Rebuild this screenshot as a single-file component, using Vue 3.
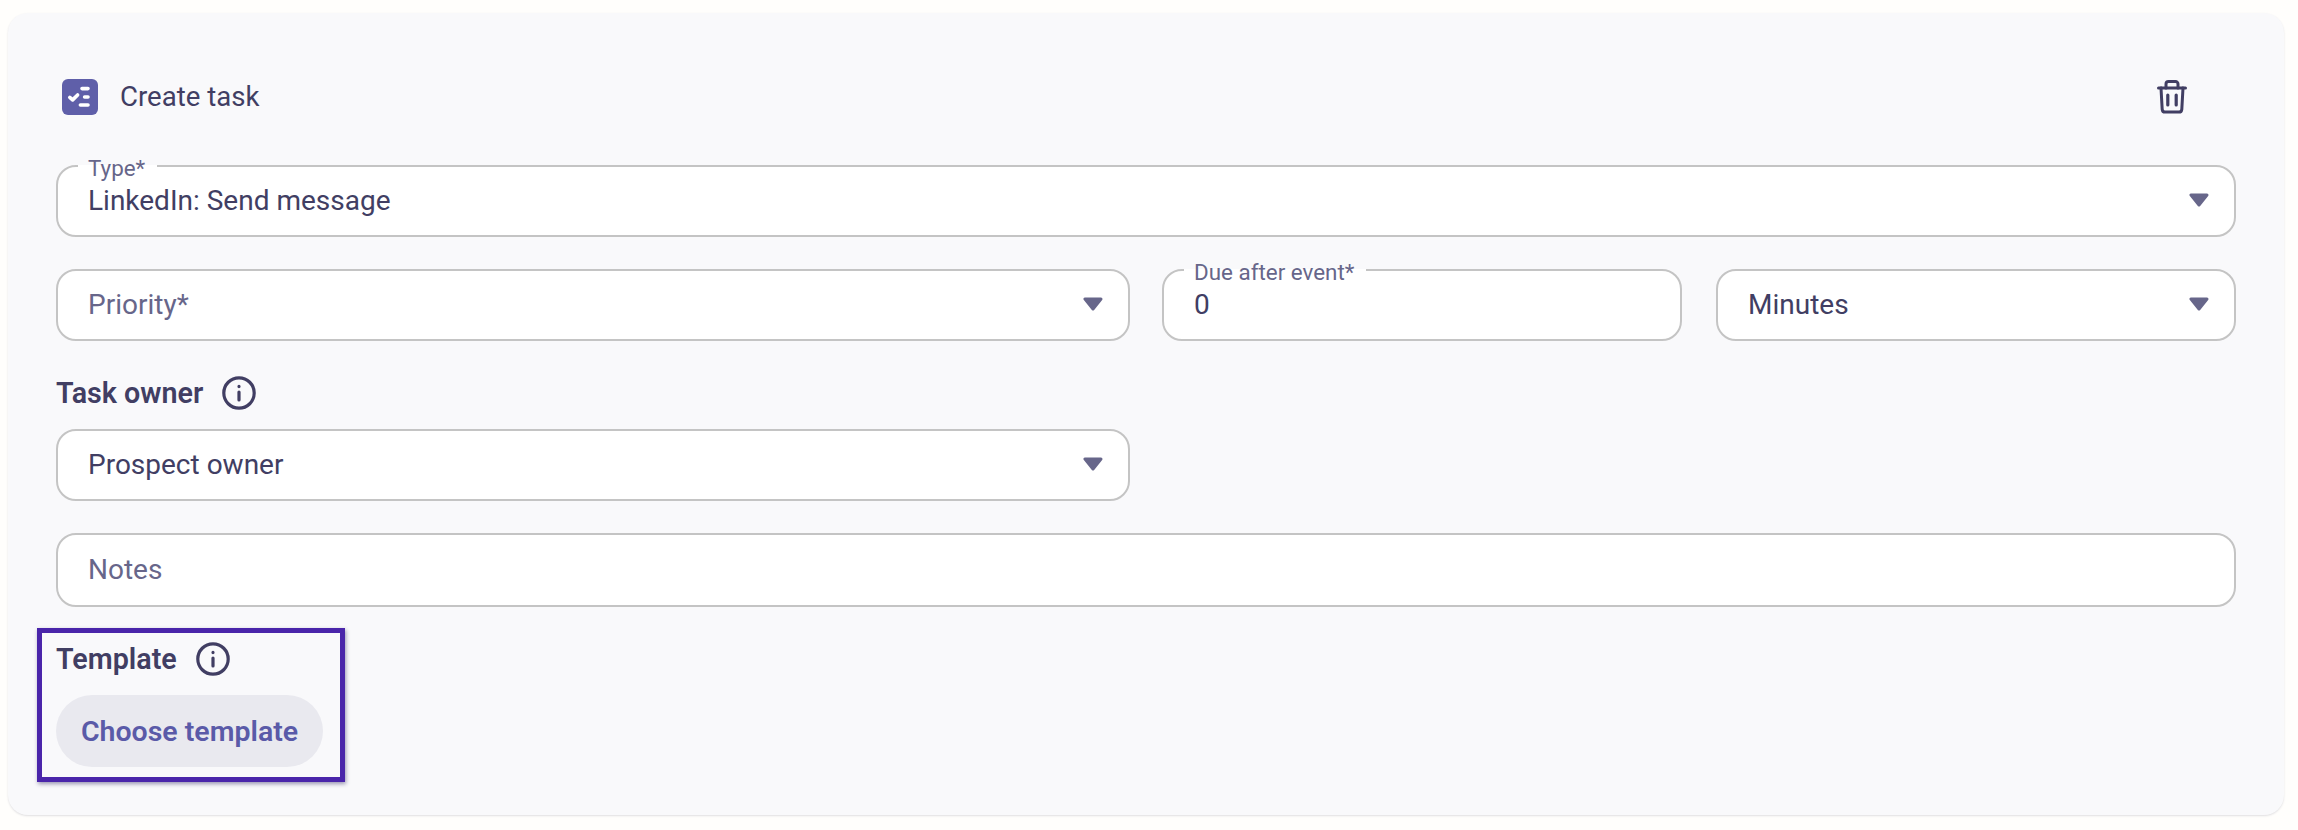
<script setup>
const carets = 'M2 2h16l-8 10z';
</script>

<template>
  <main class="page">
    <section class="card">
      <header class="head">
        <div class="head-title">
          <svg class="task-icon" viewBox="0 0 36 36" width="36" height="36" aria-hidden="true">
            <rect width="36" height="36" rx="6" fill="#5f5fa9" />
            <path d="M7.8 18.4l2.8 2.5L15.6 16" fill="none" stroke="#fff" stroke-width="3.6" stroke-linecap="round" stroke-linejoin="round" />
            <path d="M20 9.6h6M22.6 18h3.4M18.4 26h7.6" fill="none" stroke="#fff" stroke-width="3.6" stroke-linecap="round" />
          </svg>
          <span class="title">Create task</span>
        </div>
        <svg class="trash" viewBox="0 0 30 34" width="30" height="34" fill="none" stroke="#413e63" stroke-width="3" stroke-linecap="round" stroke-linejoin="round" aria-hidden="true">
          <path d="M1.5 8h27" />
          <path d="M9 8V4a2.5 2.5 0 0 1 2.5-2.5h7A2.5 2.5 0 0 1 21 4v4" />
          <path d="M4 8l1.2 21.3a3 3 0 0 0 3 2.8h13.6a3 3 0 0 0 3-2.8L26 8" />
          <path d="M10.8 15v10M19.2 15v10" stroke-width="3.2" />
        </svg>
      </header>

      <div class="field">
        <span class="float">Type*</span>
        <span class="value">LinkedIn: Send message</span>
        <svg class="caret" viewBox="0 0 20 14" aria-hidden="true"><path :d="carets" /></svg>
      </div>

      <div class="row">
        <div class="field">
          <span class="value muted">Priority*</span>
          <svg class="caret" viewBox="0 0 20 14" aria-hidden="true"><path :d="carets" /></svg>
        </div>
        <div class="pair">
          <div class="field">
            <span class="float">Due after event*</span>
            <span class="value">0</span>
          </div>
          <div class="field">
            <span class="value">Minutes</span>
            <svg class="caret" viewBox="0 0 20 14" aria-hidden="true"><path :d="carets" /></svg>
          </div>
        </div>
      </div>

      <div class="label">
        <span>Task owner</span>
        <svg viewBox="0 0 34 34" width="34" height="34" fill="none" stroke="#413e63" stroke-width="3.2" stroke-linecap="round" aria-hidden="true">
          <circle cx="17" cy="17" r="15.2" />
          <path d="M17 16v8M17 10.4v.2" />
        </svg>
      </div>
      <div class="row owner">
        <div class="field">
          <span class="value">Prospect owner</span>
          <svg class="caret" viewBox="0 0 20 14" aria-hidden="true"><path :d="carets" /></svg>
        </div>
        <div></div>
      </div>

      <div class="field notes">
        <span class="value muted">Notes</span>
      </div>

      <div class="template">
        <div class="label">
          <span>Template</span>
          <svg viewBox="0 0 34 34" width="34" height="34" fill="none" stroke="#413e63" stroke-width="3.2" stroke-linecap="round" aria-hidden="true">
            <circle cx="17" cy="17" r="15.2" />
            <path d="M17 16v8M17 10.4v.2" />
          </svg>
        </div>
        <button class="choose" type="button">Choose template</button>
        <div class="highlight"></div>
      </div>
    </section>
  </main>
</template>

<style>
html, body { background: #fffefc; }
</style>

<style scoped>
.page {
  box-sizing: border-box;
  width: 2298px;
  height: 830px;
  padding: 13px 14px 15px 8px;
  font-family: Roboto, "Liberation Sans", sans-serif;
  color: #413e63;
}
.card {
  box-sizing: border-box;
  height: 802px;
  padding: 48px;
  background: #f9f9fb;
  border-radius: 20px;
  box-shadow: 0 1px 2px rgba(60, 60, 90, 0.16);
}
.head {
  display: flex;
  align-items: center;
  justify-content: space-between;
  height: 72px;
  margin-bottom: 32px;
  padding: 0 49px 0 6px;
}
.head-title {
  display: flex;
  align-items: center;
  gap: 22px;
  font-size: 27.6px;
}
.title { padding-bottom: 2px; }
.field {
  position: relative;
  box-sizing: border-box;
  display: flex;
  align-items: center;
  height: 72px;
  padding: 0 30px 1px;
  background: #fff;
  border: 2px solid #c4c4c4;
  border-radius: 20px;
}
.value {
  font-size: 28px;
}
.muted { color: #67668a; }
.float {
  position: absolute;
  top: -11px;
  left: 20px;
  padding: 0 12px 0 10px;
  background: linear-gradient(to bottom, transparent 9px, #fff 9px);
  font-size: 22.4px;
  line-height: 24px;
  color: #67668a;
}
.caret {
  position: absolute;
  right: 25px;
  top: 26px;
  width: 20px;
  height: 14px;
}
.caret path {
  fill: #67668a;
  stroke: #67668a;
  stroke-width: 3;
  stroke-linejoin: round;
}
.row {
  display: grid;
  grid-template-columns: 1074px 1fr;
  gap: 32px;
  margin-top: 32px;
}
.pair {
  display: grid;
  grid-template-columns: 1fr 1fr;
  gap: 34px;
}
.label {
  display: flex;
  align-items: center;
  gap: 19px;
  height: 34px;
  margin-top: 35px;
  margin-bottom: 19px;
  font-size: 28.7px;
  font-weight: 600;
}
.owner { margin-top: 0; }
.notes {
  height: 74px;
  margin-top: 32px;
}
.template {
  position: relative;
  width: 267px;
}
.choose {
  display: block;
  width: 267px;
  height: 72px;
  padding: 0;
  border: 0;
  border-radius: 36px;
  background: #e9e9ef;
  color: #5a5aa8;
  font-family: inherit;
  font-size: 28.5px;
  font-weight: 600;
}
.highlight {
  position: absolute;
  top: -14px;
  left: -19px;
  right: -22px;
  bottom: -15px;
  border: 5px solid #4a25aa;
  box-shadow: 1px 2px 4px rgba(40, 30, 90, 0.45);
  pointer-events: none;
}
</style>
